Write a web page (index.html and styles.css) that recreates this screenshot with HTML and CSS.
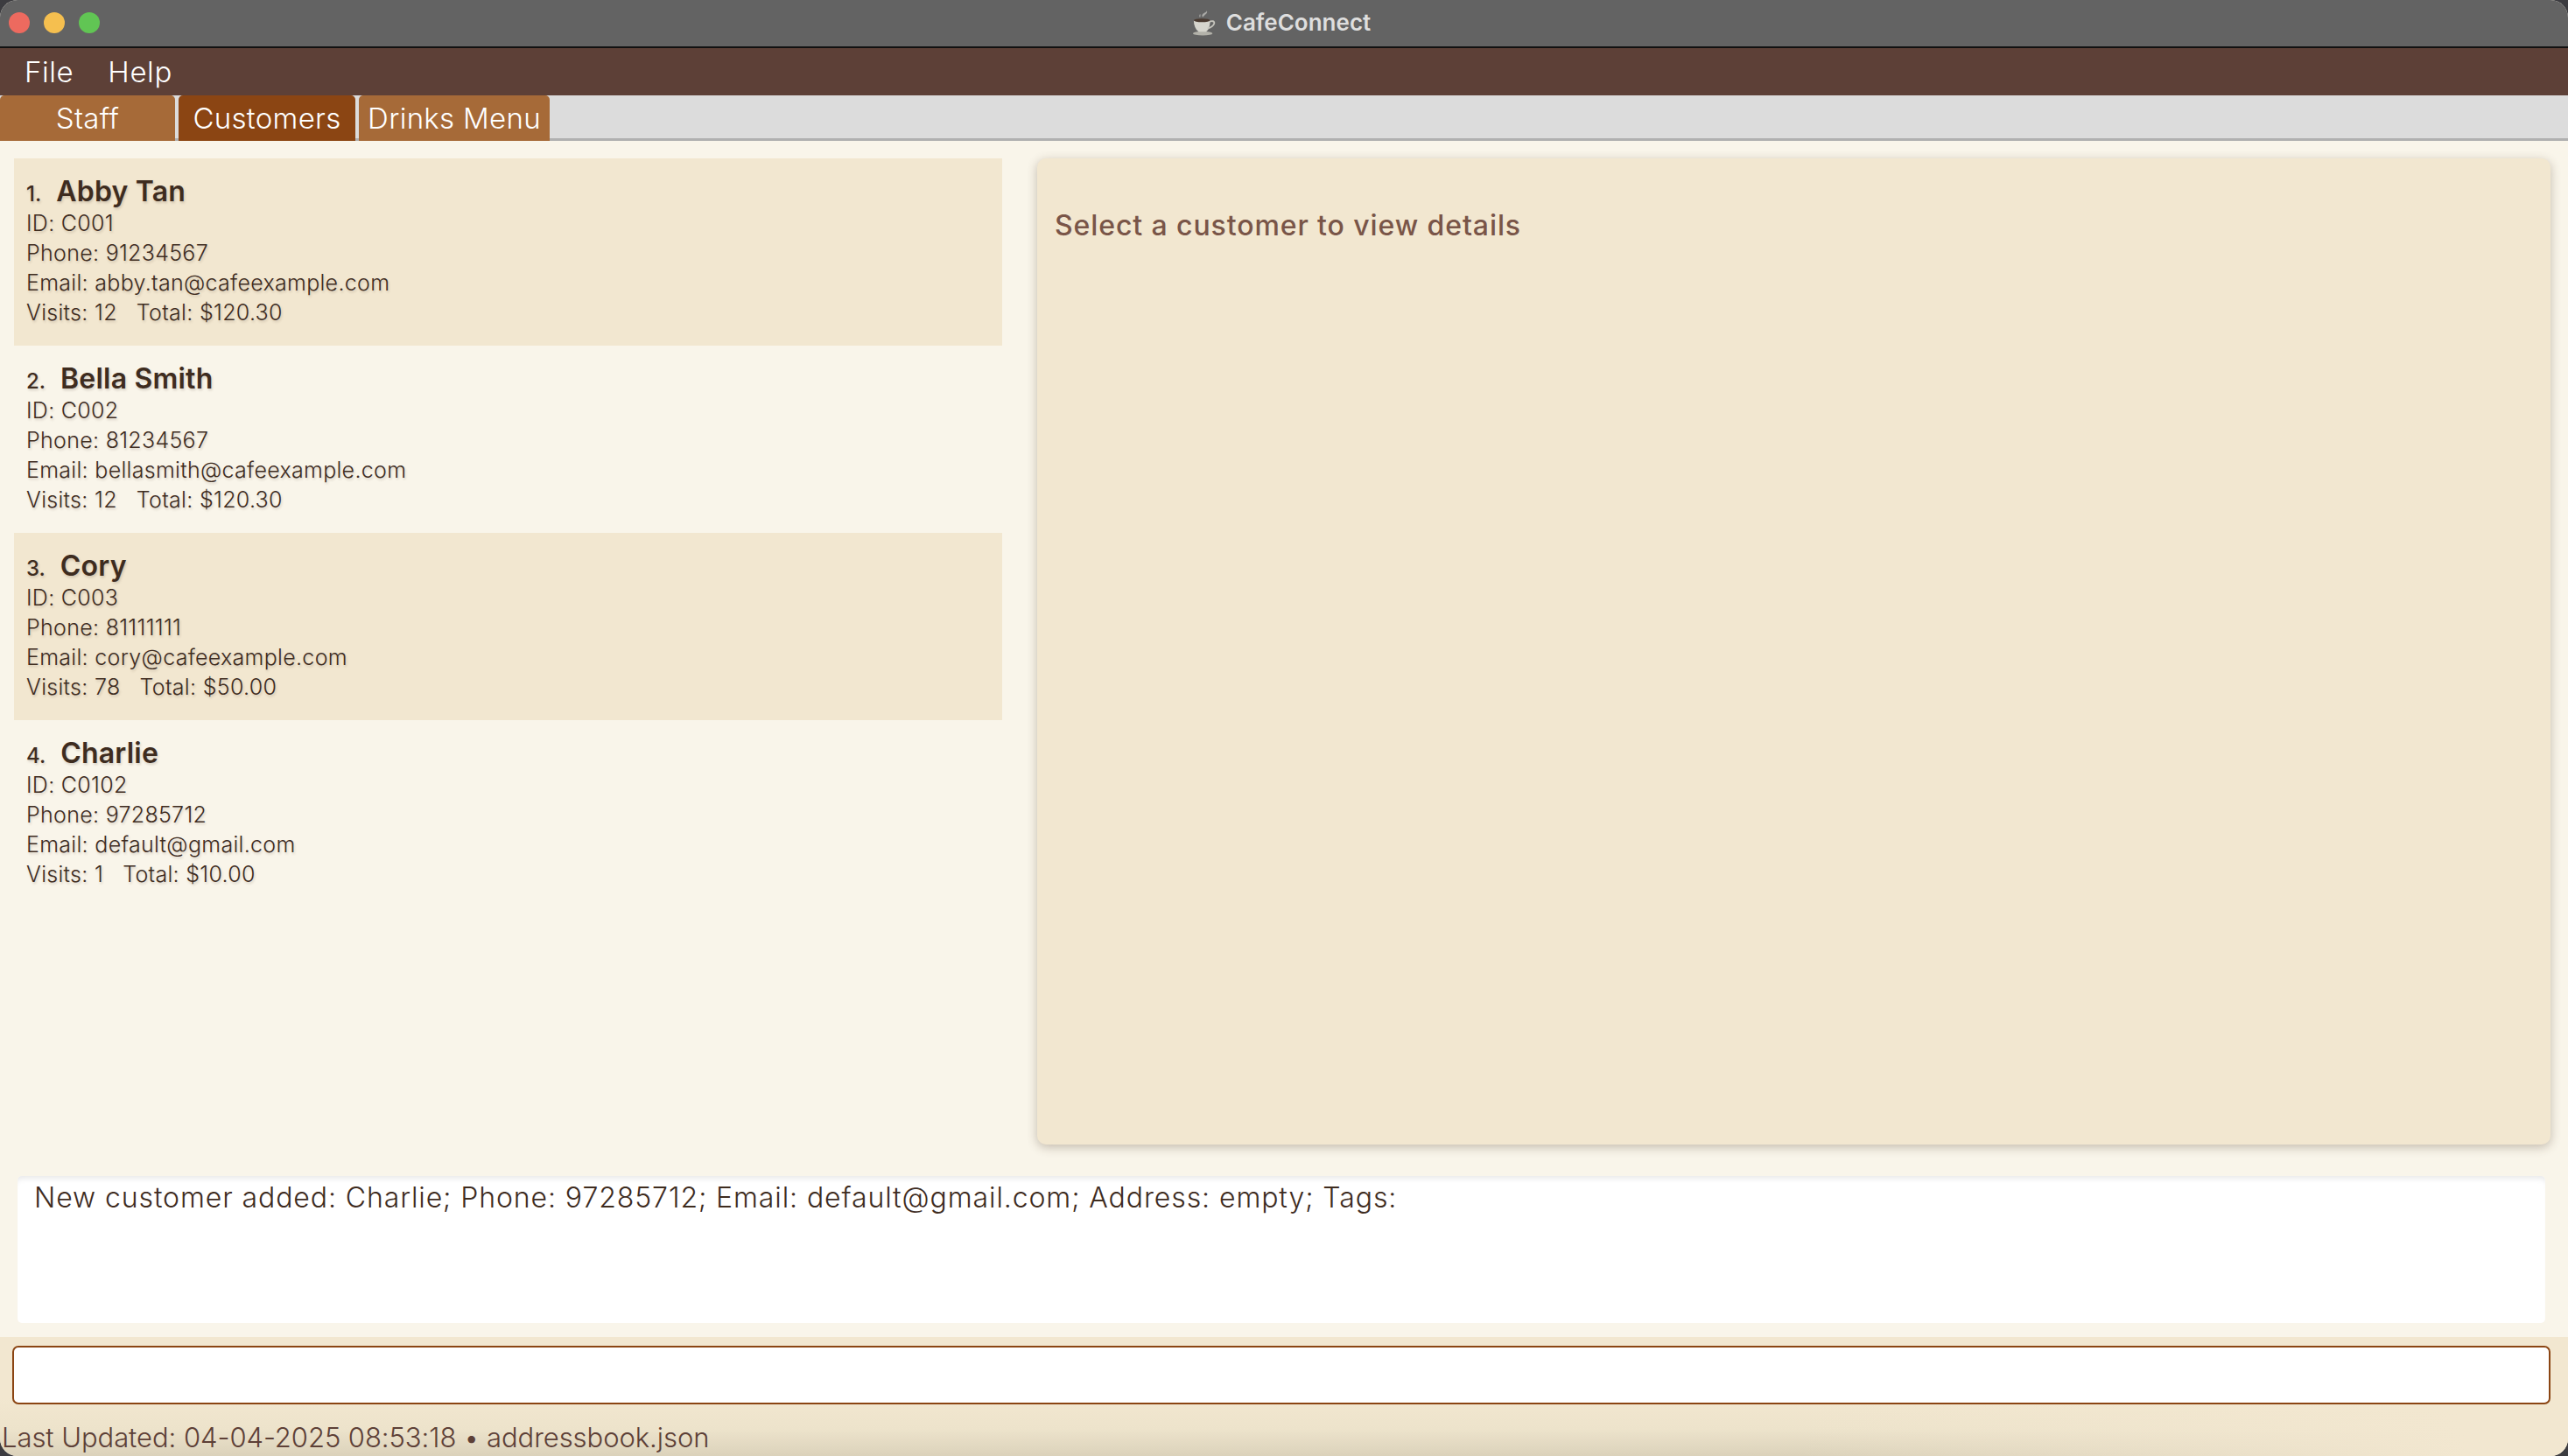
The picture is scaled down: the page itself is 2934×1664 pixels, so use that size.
FILE: index.html
```html
<!DOCTYPE html>
<html>
  <head>
    <title>CafeConnect</title>
    <link rel="stylesheet" href="styles.css">
  </head>

  <body>
    <div class="window">
      <header class="titlebar">
        <div class="lights">
          <span class="light red"></span>
          <span class="light yellow"></span>
          <span class="light green"></span>
        </div>
        <div class="title">
          <svg class="cup" viewBox="0 0 30 32" width="28" height="30">
            <path d="M13 9c-2-2 0-4 2-5 2-1 3-2 3-3 1 2 0 4-2 5-1 1-2 2-3 3z" fill="#a9a9a6"/>
            <path d="M9 9c-1-1 0-3 1-4 0 1 1 2 0 4z" fill="#9a9a97"/>
            <ellipse cx="13" cy="29" rx="12" ry="2.6" fill="#b3b2aa"/>
            <path d="M2 13h20c0 6-1 11-5 14H8C4 24 2 19 2 13z" fill="#d6d5cd"/>
            <path d="M21 15c3-2 7-1 6 2-1 3-5 5-8 6" fill="none" stroke="#c5c4bc" stroke-width="2"/>
            <ellipse cx="12" cy="13" rx="10" ry="2.2" fill="#4a3a30"/>
          </svg>
          <span>CafeConnect</span>
        </div>
        <div></div>
      </header>

      <nav class="menubar">
        <span>File</span>
        <span>Help</span>
      </nav>

      <div class="tabbar">
        <div class="tab tab-staff">Staff</div>
        <div class="tab tab-customers active">Customers</div>
        <div class="tab tab-drinks">Drinks Menu</div>
      </div>

      <main class="content">
        <div class="split">
          <ul class="customer-list">
            <li class="customer odd">
              <div class="name-row"><span class="index">1.</span><span class="name">Abby Tan</span></div>
              <div>ID: C001</div>
              <div>Phone: 91234567</div>
              <div>Email: abby.tan@cafeexample.com</div>
              <div>Visits: 12 &nbsp; Total: $120.30</div>
            </li>
            <li class="customer">
              <div class="name-row"><span class="index">2.</span><span class="name">Bella Smith</span></div>
              <div>ID: C002</div>
              <div>Phone: 81234567</div>
              <div>Email: bellasmith@cafeexample.com</div>
              <div>Visits: 12 &nbsp; Total: $120.30</div>
            </li>
            <li class="customer odd">
              <div class="name-row"><span class="index">3.</span><span class="name">Cory</span></div>
              <div>ID: C003</div>
              <div>Phone: 81111111</div>
              <div>Email: cory@cafeexample.com</div>
              <div>Visits: 78 &nbsp; Total: $50.00</div>
            </li>
            <li class="customer">
              <div class="name-row"><span class="index">4.</span><span class="name">Charlie</span></div>
              <div>ID: C0102</div>
              <div>Phone: 97285712</div>
              <div>Email: default@gmail.com</div>
              <div>Visits: 1 &nbsp; Total: $10.00</div>
            </li>
          </ul>
          <section class="details">
            <p>Select a customer to view details</p>
          </section>
        </div>
        <div class="result">New customer added: Charlie; Phone: 97285712; Email: default@gmail.com; Address: empty; Tags:</div>
      </main>

      <footer class="bottom">
        <div class="command"></div>
        <div class="status">Last Updated: 04-04-2025 08:53:18 • addressbook.json</div>
      </footer>
    </div>
  </body>
</html>
```

FILE: styles.css
```css
* {
  box-sizing: border-box;
}
html, body {
  margin: 0;
  height: 100%;
  background: #3c3c40;
}
body {
  font-family: "Inter", "Lato", sans-serif;
  font-weight: 300;
  overflow: hidden;
}
.window {
  height: 1664px;
  display: flex;
  flex-direction: column;
  overflow: hidden;
  border-radius: 20px;
  background: #f9f5ea;
}

/* window chrome */
.titlebar {
  height: 55px;
  flex: none;
  display: grid;
  grid-template-columns: 1fr auto 1fr;
  align-items: center;
  padding-bottom: 2px;
  background: #636363;
  border-bottom: 2px solid #111;
}
.lights {
  display: flex;
  gap: 16px;
  padding-left: 10px;
}
.light {
  width: 24px;
  height: 24px;
  border-radius: 50%;
}
.red { background: #ed6a5f; }
.yellow { background: #f5bf4f; }
.green { background: #61c554; }
.title {
  display: flex;
  align-items: center;
  gap: 11px;
  margin-left: -6px;
  font-size: 26px;
  font-weight: 600;
  color: #dedede;
}
.cup {
  display: block;
}

.menubar {
  height: 54px;
  flex: none;
  display: flex;
  align-items: center;
  gap: 39px;
  padding-left: 28px;
  background: #5d4037;
  color: #fff;
  font-size: 33px;
  letter-spacing: 0.6px;
}

.tabbar {
  height: 52px;
  flex: none;
  display: flex;
  gap: 4px;
  background: #dcdcdc;
  border-bottom: 3px solid #b0b0b0;
}
.tab {
  height: 52px;
  display: flex;
  align-items: center;
  justify-content: center;
  background: #a66a38;
  color: #fff;
  font-size: 33px;
  letter-spacing: 0.3px;
  border-radius: 5px 5px 0 0;
}
.tab.active { background: #8b4513; }
.tab-staff { width: 200px; }
.tab-customers { width: 202px; }
.tab-drinks { width: 218px; }

/* main area */
.content {
  flex: 1;
  min-height: 0;
  display: flex;
  flex-direction: column;
}
.split {
  height: 1147px;
  flex: none;
  display: flex;
  gap: 40px;
  padding: 20px 20px 0 16px;
}
.customer-list {
  width: 1129px;
  flex: none;
  margin: 0;
  padding: 0;
  list-style: none;
}
.customer {
  height: 214px;
  padding: 18px 14px 0;
  color: #3e2c1f;
  font-size: 25px;
  letter-spacing: 0.3px;
  line-height: 34px;
  text-shadow: 1px 2px 3px rgba(60, 40, 20, 0.18);
}
.customer.odd { background: #f2e7d0; }
.name-row {
  display: flex;
  align-items: baseline;
  gap: 17px;
  height: 39px;
  padding-top: 1px;
  line-height: 38px;
}
.index {
  font-weight: 500;
  font-size: 24px;
  letter-spacing: 0;
}
.name {
  font-size: 32px;
  font-weight: 600;
  letter-spacing: 0.2px;
}
.details {
  flex: 1;
  height: 1127px;
  padding: 57px 20px 0;
  background: #f2e7d0;
  border-radius: 10px;
  box-shadow: 0 3px 12px rgba(70, 50, 30, 0.3);
}
.details p {
  margin: 0;
  font-size: 32px;
  font-weight: 500;
  letter-spacing: 0.9px;
  line-height: 40px;
  color: #795548;
}
.result {
  height: 168px;
  flex: none;
  margin: 36px 26px 16px 20px;
  padding: 5px 19px;
  background: #fff;
  border-radius: 5px;
  box-shadow: inset 0 7px 6px -4px #e9e9ea;
  color: #3e2c1f;
  font-size: 32px;
  letter-spacing: 0.9px;
  line-height: 40px;
}

/* command box and status line */
.bottom {
  height: 136px;
  flex: none;
  padding-top: 10px;
  background:
    linear-gradient(to right, rgba(242, 231, 208, 0) 70%, #f2e7d0 96%),
    linear-gradient(to bottom, #f2e7d0 70px, #ede3cb 105px, #dbd2bb 136px);
}
.command {
  height: 67px;
  margin: 0 20px 0 14px;
  background: #fff;
  border: 2px solid #8b4513;
  border-radius: 7px;
}
.status {
  padding: 18px 0 0 2px;
  color: #5d4037;
  font-size: 31px;
  letter-spacing: -0.06px;
  line-height: 40px;
}
```
